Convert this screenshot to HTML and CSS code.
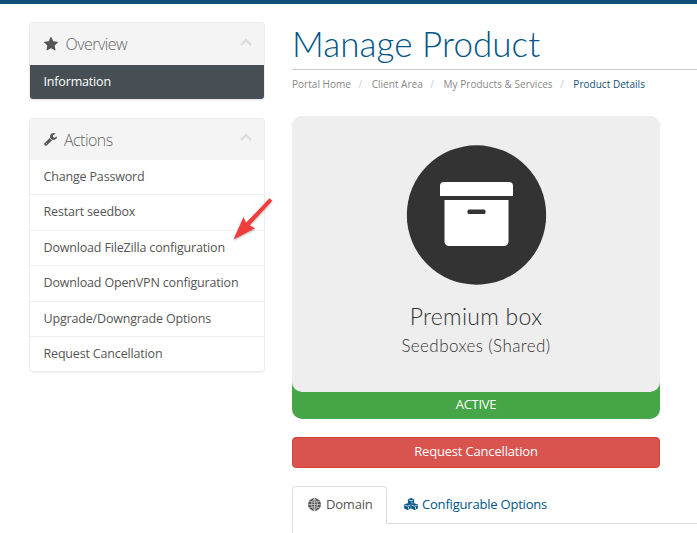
FILE: index.html
```html
<!DOCTYPE html>
<html lang="en">
<head>
<meta charset="utf-8">
<title>Manage Product</title>
<link rel="stylesheet" href="styles.css">
</head>
<body>
<div class="topbar"></div>
<div class="page">
  <aside class="sidebar">
    <section class="panel">
      <h3 class="panel-heading">
        <svg class="icon-star" viewBox="64 64 1664 1600"><path d="M1728 647q0 22-26 48l-363 354 86 500q1 7 1 20 0 21-10.500 35.500t-30.500 14.500q-19 0-40-12l-449-236-449 236q-22 12-40 12-21 0-31.500-14.500t-10.500-35.500q0-6 2-20l86-500-364-354q-25-27-25-48 0-37 56-46l502-73 225-455q19-41 49-41t49 41l225 455 502 73q56 9 56 46z"/></svg>
        <span>Overview</span>
        <svg class="chevron" viewBox="0 0 12 8"><path d="M1 7 6 2l5 5"/></svg>
      </h3>
      <a class="item active">Information</a>
    </section>
    <section class="panel actions">
      <h3 class="panel-heading">
        <svg class="icon-wrench" viewBox="64 128 1664 1664"><path d="M448 1472q0-26-19-45t-45-19-45 19-19 45 19 45 45 19 45-19 19-45zm644-420l-682 682q-37 37-90 37-52 0-91-37l-106-108q-38-36-38-90 0-53 38-91l681-681q39 98 114.500 173.500t173.500 114.500zm634-435q0 39-23 106-47 134-164.500 217.500t-258.500 83.500q-185 0-316.500-131.500t-131.500-316.500 131.500-316.500 316.500-131.500q58 0 121.500 16.500t107.500 46.500q16 11 16 28t-16 28l-293 169v224l193 107q5-3 79-48.500t135.500-81 70.500-35.500q15 0 23.500 10t8.500 25z"/></svg>
        <span>Actions</span>
        <svg class="chevron" viewBox="0 0 12 8"><path d="M1 7 6 2l5 5"/></svg>
      </h3>
      <a class="item">Change Password</a>
      <a class="item">Restart seedbox</a>
      <a class="item">Download FileZilla configuration</a>
      <a class="item">Download OpenVPN configuration</a>
      <a class="item">Upgrade/Downgrade Options</a>
      <a class="item">Request Cancellation</a>
      <svg class="pointer" viewBox="0 0 42 46"><path d="M38.500 1.300 41.200 3.800 18.500 28.300l5.500 3L2.500 42.500 12.500 20l2.500 5.800z"/></svg>
    </section>
  </aside>
  <main class="main">
    <h1>Manage Product</h1>
    <ol class="breadcrumb">
      <li>Portal Home</li><li>Client Area</li><li>My Products &amp; Services</li><li class="current">Product Details</li>
    </ol>
    <div class="status">
      <div class="product">
        <svg class="box-icon" viewBox="0 0 140 140"><circle class="disc" cx="70" cy="70" r="69.700"/><path class="box" d="M37.500 37h65a4 4 0 0 1 4 4v10h-73V41a4 4 0 0 1 4-4zM38 55h64v41.500a4.500 4.500 0 0 1-4.500 4.500h-55a4.500 4.500 0 0 1-4.500-4.500z"/><rect class="disc" x="61" y="64.500" width="18" height="4.500" rx="1.500"/></svg>
        <h3>Premium box</h3>
        <h4>Seedboxes (Shared)</h4>
      </div>
      <div class="state">ACTIVE</div>
    </div>
    <a class="cancel">Request Cancellation</a>
    <nav class="tabs">
      <a class="tab selected">
        <svg class="globe" viewBox="0 0 13 13"><circle cx="6.500" cy="6.500" r="6.100"/><path d="M6.500 .5v12M.5 6.500h12M1.500 3.500q5 1.400 10 0M1.500 9.500q5-1.400 10 0M6.500.5q-6 6 0 12M6.500.5q6 6 0 12"/></svg>
        <span>Domain</span>
      </a>
      <a class="tab">
        <svg class="cubes" viewBox="0 0 14 12"><path class="solid" d="M7 .1l3.100 1.200v3.900L7 6.600 3.900 5.200V1.300zM3.500 5.300l3.300 1.300v3.900l-3.300 1.400-3.300-1.400V6.600zM10.500 5.300l3.300 1.300v3.900l-3.300 1.400-3.300-1.400V6.600z"/><path class="edge" d="M4.600 1.900 7 2.900l2.400-1M1 7.200l2.500 1 2.500-1M8 7.200l2.500 1 2.500-1M8 5.600V3.600M4.500 10.900V8.900M11.500 10.900V8.900"/></svg>
        <span>Configurable Options</span>
      </a>
    </nav>
    <div class="tab-body"></div>
  </main>
</div>
</body>
</html>
```
FILE: styles.css
```css
* { box-sizing: border-box; }
body { margin: 0; height: 533px; overflow: hidden; background: #fff; color: #555; font: 13px/20px "Open Sans", sans-serif; }
h1, h3, h4, ol { margin: 0; padding: 0; font-weight: 300; }
svg { display: block; flex: none; }
.topbar { height: 4px; background: #0f4f79; }
.page { display: flex; padding-left: 29px; }
.sidebar { width: 236px; padding-top: 18px; flex: none; }
.panel { position: relative; border: 1px solid #ebebeb; border-radius: 4px; box-shadow: 0 1px 1px rgba(0,0,0,.05); margin-bottom: 19px; }
.panel-heading { height: 42px; display: flex; align-items: center; padding: 0 12px 0 14px; background: #f4f4f4; font-size: 16px; letter-spacing: -.55px; color: #666; border-radius: 3px 3px 0 0; }
.actions { margin-top: -1px; }
.actions .panel-heading { height: 41px; }
.icon-star { width: 14px; height: 14px; fill: #555; margin-right: 7.500px; }
.icon-wrench { width: 13px; height: 13px; fill: #555; margin-right: 7px; }
.chevron { width: 12px; height: 8px; margin: -5px 0 0 auto; fill: none; stroke: #dcdcdc; stroke-width: 2.300; }
.item { display: block; height: 35.400px; padding: 7px 13.500px 0; border-top: 1px solid #f0f0f0; font-size: 12.500px; letter-spacing: -.17px; white-space: nowrap; }
.actions .panel-heading + .item { height: 34.400px; border-top: 0; }
.active { height: 34px; background: #474f54; border: 0; color: #fff; border-radius: 0 0 3px 3px; }
.pointer { position: absolute; left: 201px; top: 78px; width: 42px; height: 46px; fill: #f13c3c; filter: drop-shadow(0 1px 1px rgba(0,0,0,.35)); }
.main { flex: 1; margin-left: 27px; padding-top: 18px; }
h1 { height: 48px; line-height: 43px; font-family: Lato, sans-serif; font-size: 35px; letter-spacing: .05px; color: #058; border-bottom: 1px solid #ccc; white-space: nowrap; }
.breadcrumb { display: flex; list-style: none; height: 46px; padding-top: 4px; font-size: 10px; letter-spacing: .03px; font-weight: 400; color: #888; white-space: nowrap; }
.breadcrumb li + li::before { content: "/"; color: #ccc; padding: 0 9.500px 0 7.500px; }
.breadcrumb .current { color: #0f4f79; }
.status { width: 368px; height: 303px; border-radius: 10px; background: linear-gradient(#eee 50%, #46a546 50%); text-align: center; }
.product { height: 276px; padding-top: 29px; background: #eee; border-radius: 10px; color: #333; font-family: Lato, sans-serif; }
.box-icon { width: 140px; height: 140px; margin: 0 auto; transform: translateX(.5px); }
.disc { fill: #333; }
.box { fill: #fff; }
.product h3 { margin-top: 17px; font-size: 23px; line-height: 28px; letter-spacing: .3px; }
.product h4 { margin-top: 4px; font-size: 17px; line-height: 24px; letter-spacing: .4px; }
.state { line-height: 25px; color: #fff; font-size: 13px; letter-spacing: -.3px; }
.cancel { display: block; width: 368px; height: 31px; margin-top: 18px; line-height: 27px; letter-spacing: -.18px; text-align: center; color: #fff; background: #d9534f; border: 1px solid #d43f3a; border-radius: 4px; }
.tabs { display: flex; margin-top: 18px; height: 38px; border-bottom: 1px solid #ddd; }
.tab { display: flex; align-items: center; height: 38px; padding: 0 14px 2px; border: 1px solid transparent; color: #058; letter-spacing: -.2px; white-space: nowrap; }
.selected { width: 95px; padding-left: 15px; margin-right: 2px; color: #555; background: #fff; border-color: #ddd #ddd #fff; border-radius: 4px 4px 0 0; }
.globe { width: 13px; height: 13px; margin-right: 5px; stroke: #ddd; stroke-width: .7; }
.globe circle { fill: #555; stroke: #555; }
.globe path { fill: none; }
.cubes { width: 14px; height: 12px; margin-right: 4px; }
.solid { fill: #058; }
.edge { fill: none; stroke: #fff; stroke-width: .8; }
.tab-body { height: 30px; border-left: 1px solid #ddd; }
```
